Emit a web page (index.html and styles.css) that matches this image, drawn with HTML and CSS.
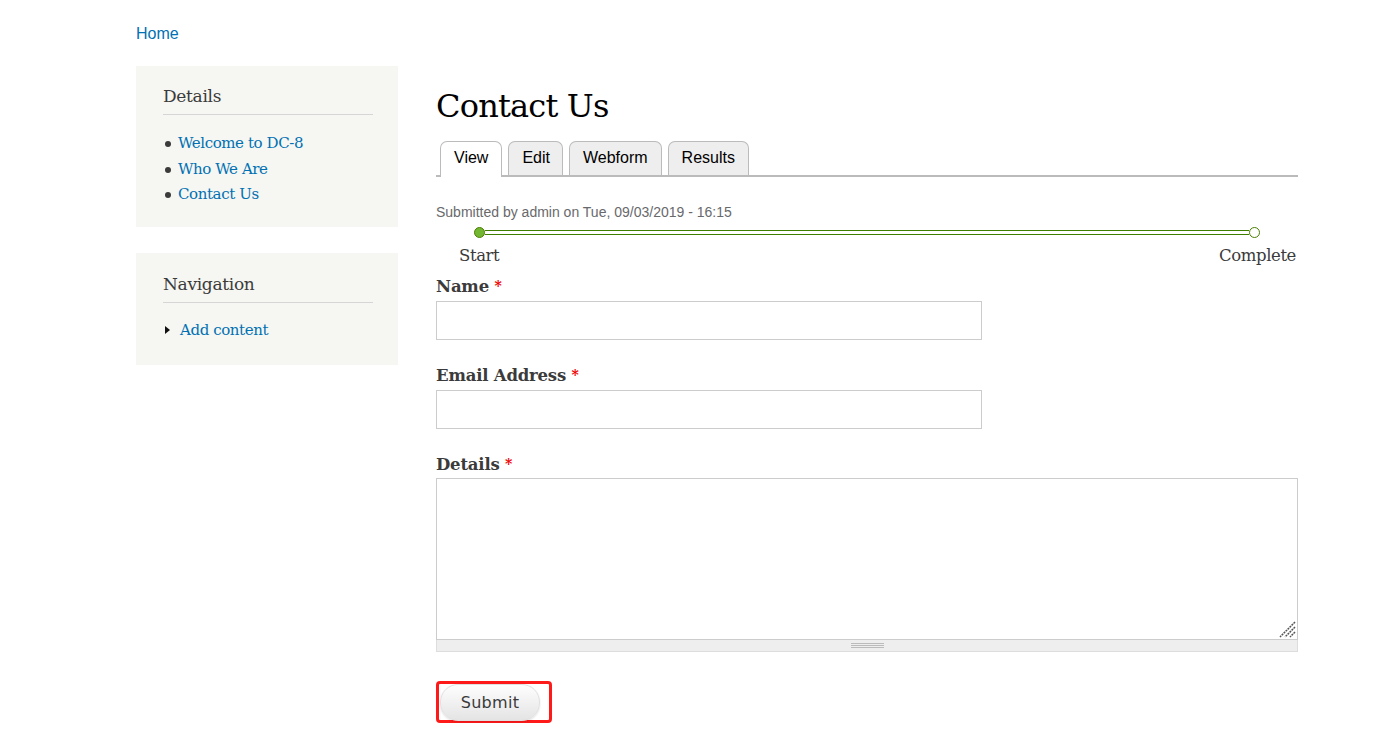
FILE: index.html
```html
<!DOCTYPE html>
<html>
<head>
<meta charset="utf-8">
<link rel="stylesheet" href="styles.css">
</head>
<body>
<div class="page">
  <div class="breadcrumb"><a href="#">Home</a></div>
  <div class="layout">
    <aside class="sidebar">
      <div class="block">
        <h2 class="block-title">Details</h2>
        <ul class="menu bullets">
          <li><a href="#">Welcome to DC-8</a></li>
          <li><a href="#">Who We Are</a></li>
          <li><a href="#">Contact Us</a></li>
        </ul>
      </div>
      <div class="block nav">
        <h2 class="block-title">Navigation</h2>
        <ul class="menu arrows">
          <li><span class="tri"></span><a href="#">Add content</a></li>
        </ul>
      </div>
    </aside>
    <main class="content">
      <h1 class="title">Contact Us</h1>
      <div class="tabs">
        <a class="tab active" href="#">View</a>
        <a class="tab" href="#">Edit</a>
        <a class="tab" href="#">Webform</a>
        <a class="tab" href="#">Results</a>
      </div>
      <div class="submitted">Submitted by admin on Tue, 09/03/2019 - 16:15</div>
      <div class="progress">
        <div class="track">
          <span class="dot start"></span>
          <span class="bar"></span>
          <span class="dot end"></span>
        </div>
        <div class="labels"><span>Start</span><span>Complete</span></div>
      </div>
      <form class="form">
        <div class="field">
          <label>Name <span class="req">*</span></label>
          <input class="text" type="text">
        </div>
        <div class="field">
          <label>Email Address <span class="req">*</span></label>
          <input class="text" type="text">
        </div>
        <div class="field last">
          <label>Details <span class="req">*</span></label>
          <div class="ta-wrap">
            <div class="ta">
              <svg class="resizer" width="18" height="18" viewBox="0 0 18 18">
                <path d="M17 2 L2 17 M17 7 L7 17 M17 12 L12 17" stroke="#555" stroke-width="1.5" stroke-dasharray="2 0.8" fill="none"/>
              </svg>
            </div>
            <div class="grippie"><span class="grip"></span></div>
          </div>
        </div>
        <div class="actions">
          <span class="highlight"><button type="button" class="btn">Submit</button></span>
        </div>
      </form>
    </main>
  </div>
</div>
</body>
</html>
```
FILE: styles.css
```css
* { box-sizing: border-box; }
html, body { margin: 0; padding: 0; background: #fff; }
body { font-family: "Liberation Serif", serif; color: #3b3b3b; }
a { color: #0071b3; text-decoration: none; }
.page { width: 1162px; margin-left: 136px; padding-top: 24px; }
.breadcrumb { font-family: "Liberation Sans", Arial, sans-serif; font-size: 16px; line-height: 19px; height: 42px; }
.layout { display: flex; gap: 38px; }
.sidebar { width: 262px; flex: none; display: flex; flex-direction: column; gap: 26px; }
.block { background: #f6f6f2; padding: 18px 25px 19px 27px; }
.block.nav { padding-top: 19px; padding-bottom: 22px; }
.block-title { font-family: "DejaVu Serif", serif; font-weight: normal; font-size: 17px; color: #3b3b3b; margin: 0; padding-bottom: 6px; border-bottom: 1px solid #d6d6d6; line-height: 24px; letter-spacing: -0.3px; }
.menu { list-style: none; margin: 0; padding: 16px 0 0 0; font-family: "DejaVu Serif", serif; font-size: 15px; line-height: 25.5px; letter-spacing: -0.4px; }
.nav .menu { padding-top: 15px; }
.bullets li { position: relative; padding-left: 15px; }
.bullets li::before { content: ""; position: absolute; left: 2px; top: 10px; width: 6px; height: 6px; border-radius: 50%; background: #3b3b3b; }
.arrows li { display: flex; align-items: center; }
.tri { width: 0; height: 0; border-left: 5px solid #111; border-top: 4.5px solid transparent; border-bottom: 4.5px solid transparent; margin-right: 10px; margin-left: 2px; }
.content { flex: 1; }
.title { font-family: "DejaVu Serif", serif; font-weight: normal; font-size: 32px; color: #000; margin: 20px 0 0 0; line-height: 40px; letter-spacing: -0.8px; }
.tabs { display: flex; gap: 6px; padding-left: 4px; margin-top: 15px; border-bottom: 2px solid #bbb; height: 36px; align-items: flex-end; }
.tab { font-family: "Liberation Sans", Arial, sans-serif; font-size: 16px; color: #000; background: #eee; border: 1px solid #bbb; border-bottom: none; border-radius: 7px 7px 0 0; height: 34px; line-height: 32px; padding: 0 13px; }
.tab.active { background: #fff; height: 36px; margin-bottom: -2px; }
.tab:nth-child(2) { padding: 0 12px 0 13px; }
.submitted { font-family: "Liberation Sans", Arial, sans-serif; font-size: 14px; color: #68696b; margin-top: 27px; line-height: 17px; }
.progress { margin-top: 5px; }
.track { display: flex; align-items: center; margin: 0 38px 0 38px; height: 12px; }
.dot { width: 11px; height: 11px; border-radius: 50%; border: 1px solid #4a8000; flex: none; background: #fff; }
.dot.start { background: #73b632; }
.bar { flex: 1; height: 5px; border-top: 1.5px solid #3e7d00; border-bottom: 1.5px solid #3e7d00; }
.labels { display: flex; justify-content: space-between; font-family: "DejaVu Serif", serif; font-size: 16.5px; line-height: 22px; padding: 0 2px 0 23px; margin-top: 7px; letter-spacing: -0.4px; }
.form { margin-top: 8px; }
.field { margin-bottom: 24px; }
.field label { display: block; font-family: "DejaVu Serif", serif; font-weight: bold; font-size: 16.5px; line-height: 22px; margin-bottom: 3px; letter-spacing: -0.2px; color: #3b3b3b; }
.req { color: #ee0000; font-weight: bold; font-size: 14px; vertical-align: 1px; }
.text { display: block; width: 546px; height: 39px; border: 1px solid #ccc; background: #fff; margin: 0; }
.field.last { margin-bottom: 29px; }
.field.last label { margin-bottom: 2px; }
.ta-wrap { width: 862px; }
.ta { height: 162px; border: 1px solid #ccc; position: relative; background: #fff; }
.resizer { position: absolute; right: 1px; bottom: 1px; }
.grippie { height: 12px; background: #eee; border: 1px solid #ddd; border-top: none; display: flex; justify-content: center; align-items: center; }
.grip { width: 33px; height: 5px; border-top: 1px solid #bbb; border-bottom: 1px solid #bbb; background: linear-gradient(#fff0 40%, #bbb 40%, #bbb 60%, #fff0 60%); }
.highlight { display: inline-block; border: 3px solid #ff1a1a; border-radius: 4px; padding: 0 9px 0 1px; height: 42px; }
.btn { font-family: "DejaVu Sans", sans-serif; font-size: 16px; color: #3a3a3a; height: 37px; width: 100px; border: 1px solid #e0e0e0; border-radius: 18px; background: linear-gradient(#fefefe, #e4e4e4); margin: 0; padding: 0; letter-spacing: 0.3px; box-shadow: 0 1px 2px rgba(0,0,0,0.12); }
```
